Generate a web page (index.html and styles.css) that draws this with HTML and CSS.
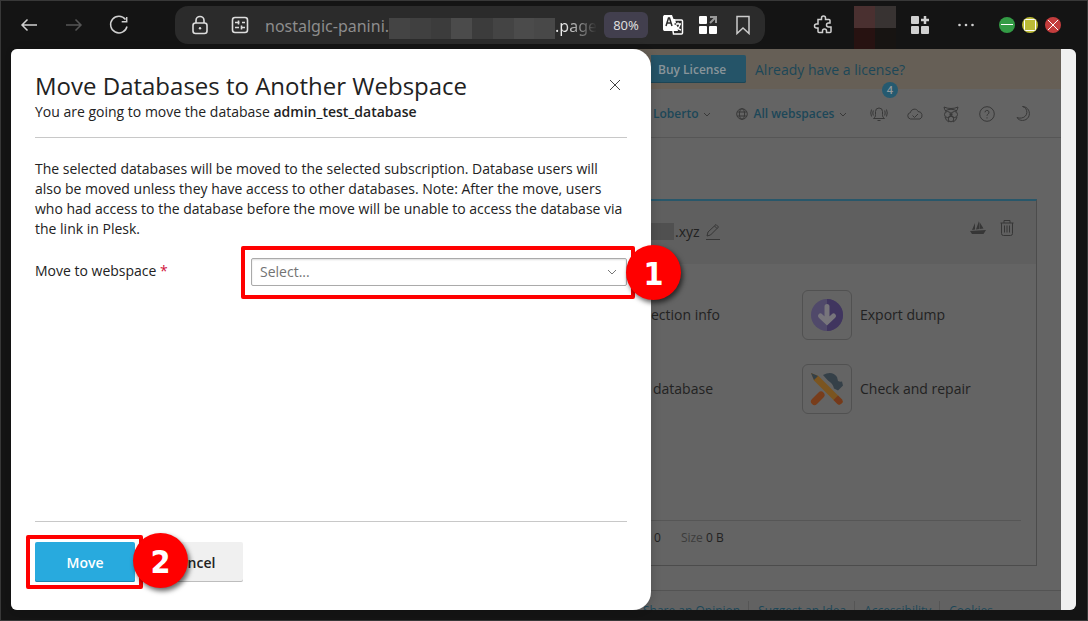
FILE: index.html
```html
<!DOCTYPE html>
<html lang="en">
<head>
<meta charset="utf-8">
<title>Move Databases to Another Webspace</title>
<link rel="stylesheet" href="styles.css">
</head>
<body>
<div class="window">
  <header class="toolbar">
    <nav class="nav-buttons">
      <button class="icon-btn" aria-label="Back"><svg width="20" height="20" viewBox="0 0 20 20"><path d="M18 10H3M8.500 4.500L3 10l5.500 5.500"/></svg></button>
      <button class="icon-btn dim" aria-label="Forward"><svg width="20" height="20" viewBox="0 0 20 20"><path d="M2 10h15M11.500 4.500L17 10l-5.500 5.500"/></svg></button>
      <button class="icon-btn" aria-label="Reload"><svg width="20" height="20" viewBox="0 0 20 20"><path d="M16.500 4.500A8.300 8.300 0 1 0 18 11.500M17.700 2v4.800h-5"/></svg></button>
    </nav>
    <div class="address">
      <svg class="lock" width="20" height="20" viewBox="0 0 20 20"><rect x="3" y="8" width="14" height="10.500" rx="2.500"/><path d="M6 8V5.500a4 4 0 0 1 8 0V8"/><circle class="solid" cx="10" cy="13.300" r="1.200"/></svg>
      <svg class="site" width="20" height="20" viewBox="0 0 20 20"><rect x="2.500" y="2.500" width="15" height="15" rx="2.500"/><path d="M5 7.500h4.500M12 7.500h3M8.500 5.500v4M5 12.500h4M11.500 10.500v4M11.500 12.500H15"/></svg>
      <div class="url"><span>nostalgic-panini.</span><span class="mosaic"><i class="a"></i><i class="b"></i><i class="c"></i><i class="d"></i><i class="c"></i><i class="a"></i><i class="d"></i><i class="e"></i></span><span class="tail">.page</span></div>
      <button class="zoom-level">80%</button>
      <div class="address-tools">
        <button class="icon-btn" aria-label="Translate"><svg width="22" height="22" viewBox="0 0 22 22"><path class="solid" d="M2 1h8l1.500 4H13l3 12H3.500A2 2 0 0 1 1 15V2.500z"/><path class="ink" d="M4 12l2.500-8h1L10 12M5 9h4"/><path d="M12 6h7.500a1 1 0 0 1 1 1v12a1 1 0 0 1-1 1h-8L11 17"/><path class="ink" d="M12.500 10H15"/><path d="M14 10h5M16 8.500V10M18 10c-.5 3-2 5-5 6M14 12c1 2 2.500 3.500 5 4"/></svg></button>
        <button class="icon-btn" aria-label="Split tabs"><svg width="20" height="20" viewBox="0 0 20 20"><rect class="solid" x="1" y="1" width="8" height="8" rx="1"/><rect class="solid" x="1" y="11" width="8" height="8" rx="1"/><rect class="solid" x="11" y="11" width="8" height="8" rx="1"/><path class="arrow" d="M12 8l5-5M12 2h6v6"/></svg></button>
        <button class="icon-btn" aria-label="Bookmark"><svg width="20" height="20" viewBox="0 0 20 20"><path d="M4 1.500h12v17l-6-5.500-6 5.500z"/></svg></button>
      </div>
    </div>
    <button class="icon-btn extensions" aria-label="Extensions"><svg width="20" height="20" viewBox="0 0 20 20"><path d="M5 4.500h3.500V3a2 2 0 0 1 4 0v1.500H16a1 1 0 0 1 1 1V8h-1.500a2 2 0 0 0 0 4H18v4.500a1 1 0 0 1-1 1h-3.500V16a2 2 0 0 0-4 0v1.500H6a1 1 0 0 1-1-1V13H3.500a2 2 0 0 1 0-4H5z"/></svg></button>
    <div class="avatar-mosaic"><i></i><i></i><i></i><i></i></div>
    <button class="icon-btn apps" aria-label="Add app"><svg width="20" height="20" viewBox="0 0 20 20"><g class="solid"><rect x="1" y="1" width="8" height="8" rx="1"/><rect x="1" y="11" width="8" height="8" rx="1"/><rect x="11" y="11" width="8" height="8" rx="1"/></g><path class="plus" d="M15 1v8M11 5h8"/></svg></button>
    <button class="icon-btn more" aria-label="More"><svg width="20" height="20" viewBox="0 0 20 20"><g class="solid"><circle cx="3.500" cy="10" r="1.300"/><circle cx="10" cy="10" r="1.300"/><circle cx="16.500" cy="10" r="1.300"/></g></svg></button>
    <div class="window-buttons">
      <button class="win green" aria-label="Minimize"><svg width="16" height="16" viewBox="0 0 16 16"><path d="M2 7.500h12"/></svg></button>
      <button class="win yellow" aria-label="Maximize"><svg width="16" height="16" viewBox="0 0 16 16"><rect x="2.500" y="2.500" width="11" height="11" rx="1"/></svg></button>
      <button class="win red" aria-label="Close window"><svg width="16" height="16" viewBox="0 0 16 16"><path d="M3 3l10 10M13 3L3 13"/></svg></button>
    </div>
  </header>

  <div class="viewport">
    <main class="page">
      <div class="banner">
        <button class="buy">Buy License</button>
        <a href="#">Already have a license?</a>
      </div>
      <div class="site-header">
        <a class="menu user" href="#">Loberto <svg width="8" height="8" viewBox="0 0 8 8"><path d="M1 3l3 3 3-3"/></svg></a>
        <a class="menu spaces" href="#"><svg width="12" height="12" viewBox="0 0 12 12"><circle cx="6" cy="6" r="5.300"/><ellipse cx="6" cy="6" rx="2.600" ry="5.300"/><path d="M1.300 4h9.400M1.300 8h9.400"/></svg> All webspaces <svg width="8" height="8" viewBox="0 0 8 8"><path d="M1 3l3 3 3-3"/></svg></a>
        <div class="header-icons">
          <button class="bell" aria-label="Notifications"><svg width="18" height="18" viewBox="0 0 18 18"><path d="M3.500 13.500h11c-1.500-1-2-2-2-4V6.500a3.500 3.500 0 0 0-7 0v3c0 2-.5 3-2 4zM7.500 15.500h3M3.300 5.500q-1 2.500 0 5M1.500 4.500q-1.500 3.500 0 7M14.700 5.500q1 2.500 0 5M16.500 4.500q1.500 3.500 0 7"/></svg><span class="badge">4</span></button>
          <button aria-label="Cloud"><svg width="18" height="18" viewBox="0 0 18 18"><path d="M4.500 14a3.300 3.300 0 0 1 0-6.500c.5-4 6.500-4.500 7.500-1a4 4 0 0 1 2 7.500zM6.500 10.500l2 2 3.500-3.500"/></svg></button>
          <button aria-label="Advisor"><svg width="18" height="18" viewBox="0 0 18 18"><circle cx="5.500" cy="9.500" r="3"/><circle cx="12.500" cy="9.500" r="3"/><circle cx="9" cy="14" r="2.800"/><path d="M2 2q3 1.500 7 1.500T16 2q-.5 3-2 4.500M2 2q.5 3 2 4.500M3 6q6-3.500 12 0M9 7v5M7.500 9.500h3M3 12q1 4 4 5M15 12q-1 4-4 5"/></svg></button>
          <button aria-label="Help"><svg width="18" height="18" viewBox="0 0 18 18"><circle cx="9" cy="9" r="7.300"/><path d="M7 7.300a2 2 0 1 1 2.800 1.900Q9 9.700 9 10.800M9 12.300v1.200"/></svg></button>
          <button aria-label="Dark mode"><svg width="18" height="18" viewBox="0 0 18 18"><path d="M8.500 1.500c6 1.500 6 10.500-1 11.500q-2.500.5-4.500-.5c2 4 9 4 11.500-.5S14 1.500 8.500 1.500z"/></svg></button>
        </div>
      </div>
      <section class="card">
        <div class="card-head">
          <span class="domain-mosaic"></span><span>.xyz</span>
          <button class="edit" aria-label="Edit"><svg width="16" height="18" viewBox="0 0 16 18"><path d="M2 13l1-4L11 1.500l2.500 2.500L5.500 12zM9.500 3l2.500 2.500M1 16.500h14"/></svg></button>
          <div class="card-tools">
            <button aria-label="phpMyAdmin"><svg class="boat" width="16" height="16" viewBox="0 0 16 16"><path d="M0 11l16-1-2.500 4H2zM2 10l3-7v6.500zM6 9.500L9 1v8zM9.500 9V2l4 6.500z"/></svg></button>
            <button aria-label="Remove"><svg width="16" height="18" viewBox="0 0 16 18"><path d="M1.500 4h13M5 4V1.500h6V4M2.500 4v10.500a2 2 0 0 0 2 2h7a2 2 0 0 0 2-2V4M5.500 6.500v7M8 6.500v7M10.500 6.500v7"/></svg></button>
          </div>
        </div>
        <div class="card-body">
          <div class="actions">
            <a class="action" href="#">ection info</a>
            <a class="action" href="#"><span class="tile"><svg width="34" height="34" viewBox="0 0 34 34"><circle cx="17" cy="17" r="16" fill="#50496a"/><path d="M17 1a16 16 0 0 1 0 32z" fill="#40355f"/><path d="M17 8.500v14M10.500 18l6.500 6 6.500-6" fill="none" stroke="#77757b" stroke-width="5" stroke-linecap="round"/></svg></span>Export dump</a>
            <a class="action shifted" href="#">database</a>
            <a class="action" href="#"><span class="tile"><svg width="34" height="34" viewBox="0 0 34 34"><path d="M13 3q9-5 14 2l1 4q2 1 4 .5l1 4-5 5-4-2q-1-5-6-8-2-2-5-5.500z" fill="#354048"/><path d="M4.500 29.500L11 23" stroke="#783d1b" stroke-width="7" stroke-linecap="round"/><path d="M1 1l7.500 3L32 27.500q1.500 2-.5 4t-4 .5L4 8.500z" fill="#7b5520"/><path d="M1 1l7 3-4 4z" fill="#344047"/><path d="M28 23.500l4 4q1.500 2-.5 4t-4 .5l-4-4z" fill="#75391b"/></svg></span>Check and repair</a>
          </div>
          <div class="stats"><span>0</span><span><em>Size</em> 0 B</span></div>
        </div>
      </section>
      <footer class="page-footer">
        <a href="#">Share an Opinion</a><a href="#">Suggest an Idea</a><a href="#">Accessibility</a><a href="#">Cookies</a>
      </footer>
    </main>
    <div class="scroll-track"></div>

    <form class="drawer" role="dialog" aria-labelledby="drawer-title">
      <div class="drawer-head">
        <div>
          <h1 id="drawer-title">Move Databases to Another Webspace</h1>
          <p>You are going to move the database <b>admin_test_database</b></p>
        </div>
        <button class="close" type="button" aria-label="Close"><svg width="12" height="12" viewBox="0 0 12 12"><path d="M1 1l10 10M11 1L1 11"/></svg></button>
      </div>
      <div class="drawer-body">
        <p>The selected databases will be moved to the selected subscription. Database users will also be moved unless they have access to other databases. Note: After the move, users who had access to the database before the move will be unable to access the database via the link in Plesk.</p>
        <div class="field">
          <label for="webspace">Move to webspace <span class="required">*</span></label>
          <div class="select-wrap">
            <select id="webspace"><option>Select...</option></select>
            <svg class="chevron" width="10" height="10" viewBox="0 0 10 10"><path d="M1 3l4 4 4-4"/></svg>
            <span class="frame"></span><span class="step">1</span>
          </div>
        </div>
      </div>
      <div class="drawer-foot">
        <div class="submit-wrap"><button class="btn primary" type="button">Move</button><span class="frame"></span><span class="step">2</span></div>
        <button class="btn" type="button">Cancel</button>
      </div>
    </form>
  </div>
</div>
</body>
</html>
```

FILE: styles.css
```css
* { box-sizing: border-box; }
body { margin: 0; font: 14px/20px "Open Sans", "Noto Sans", sans-serif; color: #222; }
button { font: inherit; border: 0; padding: 0; background: none; color: inherit; }
a { color: inherit; text-decoration: none; }
h1, p { margin: 0; }
svg { display: block; flex: none; fill: none; stroke: currentColor; }

.window { height: 100vh; display: flex; flex-direction: column; padding: 0 11px 10px 10px; background: #141414; border: 1px solid #383838; overflow: hidden; }

/* Browser toolbar */
.toolbar { flex: none; height: 48px; display: flex; align-items: center; padding: 0 15px 0 6px; color: #d0d0d0; }
.icon-btn { width: 24px; height: 24px; display: grid; place-items: center; flex: none; }
.icon-btn svg { stroke-width: 1.5; }
.dim { color: #555; }
.nav-buttons { display: flex; gap: 21px; }
.toolbar .solid { fill: currentColor; stroke: none; }
.address { flex: 1; min-width: 0; height: 38px; margin: 0 46px 0 44px; padding: 0 10px 0 15px; display: flex; align-items: center; background: #2b2b2b; border-radius: 13px; }
.address .lock, .address .site { stroke-width: 1.6; color: #ddd; }
.address .site { margin-left: 20px; }
.url { flex: 1; min-width: 0; display: flex; align-items: center; margin: 0 8px 0 15px; overflow: hidden; font: 16px/24px "Noto Sans", sans-serif; color: #8d8d8d; white-space: nowrap; }
.url span:not(.mosaic) { padding-top: 2px; }
.mosaic { flex: none; width: 166px; height: 21px; margin-top: 6px; display: flex; }
.mosaic i { flex: 1; background: #444; }
.mosaic .b { background: #404040; }
.mosaic .c { background: #3c3c3c; }
.mosaic .d { background: #4b4b4b; }
.mosaic .e { background: #484848; }
.tail { color: transparent; background: linear-gradient(90deg, #eee 20%, #2b2b2b); background-clip: text; -webkit-background-clip: text; }
.zoom-level { flex: none; width: 44px; height: 26px; background: #423f4e; border-radius: 6px; font: 13px/26px "Noto Sans", sans-serif; color: #ddd; }
.address-tools { display: flex; gap: 11px; margin-left: 13px; color: #fff; }
.address-tools .ink { stroke: #2b2b2b; }
.arrow { stroke: #999; stroke-width: 2; }
.address-tools .icon-btn:last-child { color: #ccc; }
.avatar-mosaic { flex: none; align-self: flex-end; width: 42px; height: 43px; margin: 0 12px 0 19px; display: grid; grid-template: 22px 1fr / 1fr 1fr; }
.avatar-mosaic i { background: #4a3030; }
.avatar-mosaic i:nth-child(2) { background: #383332; }
.avatar-mosaic i:nth-child(3) { background: #271211; }
.avatar-mosaic i:nth-child(4) { background: #171412; }
.plus { stroke-width: 2.5; }
.more { margin-left: 22px; }
.window-buttons { display: flex; gap: 7px; margin-left: 21px; }
.win { width: 16px; height: 16px; border-radius: 50%; color: #fff; }
.green { background: #339b45; }
.yellow { background: #bbba36; }
.red { background: #c33d3d; }

/* Dimmed page behind the drawer */
.viewport { flex: 1; min-height: 0; position: relative; display: flex; border-radius: 6px; background: #646464; }
.page { flex: 1; min-width: 0; display: flex; flex-direction: column; padding-left: 640px; overflow: hidden; background: #646464; border-radius: 6px 0 0 6px; color: #222; }
.scroll-track { flex: none; width: 15px; background: #f0f0f0; border-radius: 0 6px 6px 0; }
.banner { flex: none; height: 40px; margin-left: -24px; padding-left: 24px; display: flex; align-items: center; gap: 9px; background: #665f56; color: #1c4758; white-space: nowrap; }
.banner a { padding-top: 2px; }
.buy { width: 95px; height: 28px; padding: 2px 19px 0 7px; background: #255468; box-shadow: inset 0 -1px #1c4555; border-radius: 0 2px 2px 0; font-size: 12px; font-weight: 600; text-align: left; color: #89949a; }
.site-header { flex: none; height: 49px; display: flex; align-items: center; padding: 2px 29px 0 2px; border-bottom: 1px solid #565656; font-size: 12px; font-weight: 600; color: #1c4758; white-space: nowrap; }
.menu { display: flex; align-items: center; gap: 5px; }
.menu svg { color: #393939; }
.spaces { margin-left: 25px; }
.header-icons { display: flex; gap: 18px; margin-left: auto; color: #383838; }
.bell { position: relative; }
.badge { position: absolute; left: 12px; top: -23px; width: 16px; height: 16px; border-radius: 50%; background: #255a70; color: #949b9e; font-size: 11px; line-height: 16px; }
.card { flex: none; height: 367px; margin: 61px 24px 24px 0; display: flex; flex-direction: column; border: solid #4c4c4c; border-width: 2px 1px 1px 0; border-top-color: #28576a; }
.card-head { height: 63px; display: flex; align-items: center; padding-bottom: 2px; background: #5f5f5f; }
.domain-mosaic { width: 23px; height: 17px; margin-right: 1px; background: #505050; }
.edit { margin-left: 5px; color: #363636; }
.card-tools { display: flex; align-items: center; gap: 13px; margin: 0 21px 8px auto; color: #363636; }
.boat { fill: currentColor; stroke: none; }
.card-body { flex: 1; display: flex; flex-direction: column; justify-content: space-between; padding: 26px 15px 17px 0; }
.actions { display: grid; grid-template-columns: 151px 1fr; row-gap: 24px; }
.action { display: flex; align-items: center; gap: 8px; line-height: 22px; white-space: nowrap; }
.shifted { padding-left: 2px; }
.tile { width: 50px; height: 50px; display: grid; place-items: center; border: 1px solid #515151; border-radius: 6px; }
.tile svg { stroke: none; }
.stats { display: flex; gap: 20px; padding: 7px 0 0 3px; border-top: 1px solid #565656; font-size: 12px; }
.stats em { font-style: normal; color: #3c3c3c; }
.page-footer { flex: none; display: flex; margin-left: -8px; padding-top: 10px; background: #626262; border-top: 1px solid #535353; font-size: 12px; color: #1c4758; white-space: nowrap; }
.page-footer a { padding: 0 8px 0 9px; border-right: 1px solid #555; text-decoration: underline; }
.page-footer a:first-child { padding-left: 0; }
.page-footer a:last-child { border: 0; }

/* Drawer */
.drawer { position: absolute; inset: 0 auto 0 0; width: 640px; max-width: 100%; display: flex; flex-direction: column; padding: 0 24px; background: #fff; border-radius: 6px 18px 18px 6px; box-shadow: 2px 0 8px #0002; }
.drawer-head { display: flex; align-items: flex-start; justify-content: space-between; padding: 23px 0 15px; border-bottom: 1px solid #c8c8c8; }
h1 { margin-bottom: 2px; font-size: 24px; line-height: 28px; font-weight: 400; }
b { font-weight: 600; }
.close { padding: 7px 6px; color: #444; }
.drawer-body { flex: 1; padding-top: 21px; }
.field { display: flex; align-items: center; margin-top: 19px; }
.field label { flex: none; width: 216px; padding-bottom: 2px; }
.required { color: #d0103a; }
.select-wrap { flex: 1; position: relative; }
select { display: block; width: 100%; height: 28px; padding: 0 8px; appearance: none; border: 1px solid #aaa; border-radius: 2px; background: #fff; box-shadow: inset 0 1px 2px #0002; font: inherit; color: #737373; }
.chevron { position: absolute; right: 10px; top: 9px; color: #777; pointer-events: none; }
.frame { position: absolute; inset: -12px -8px -13px -10px; border: 4px solid #f00; border-radius: 2px; pointer-events: none; }
.step { position: absolute; right: -54px; top: -13px; width: 55px; height: 55px; border-radius: 50%; background: #f00; box-shadow: 2px 3px 5px #0009; color: #fff; font: bold 32px/58px "DejaVu Sans Condensed", "DejaVu Sans", sans-serif; text-align: center; }
.drawer-foot { display: flex; gap: 8px; padding: 20px 0 28px; border-top: 1px solid #c8c8c8; }
.submit-wrap { position: relative; }
.submit-wrap .frame { inset: -7px -8px -7px -9px; }
.submit-wrap .step { top: -9px; right: -53px; }
.btn { display: block; width: 100px; height: 40px; padding-top: 2px; border-radius: 2px; background: #f0f0f0; box-shadow: inset 0 -1px #bdbdbd; font-weight: 600; }
.primary { background: #28aade; box-shadow: inset 0 -1px #1c86b0; color: #fff; }
```
